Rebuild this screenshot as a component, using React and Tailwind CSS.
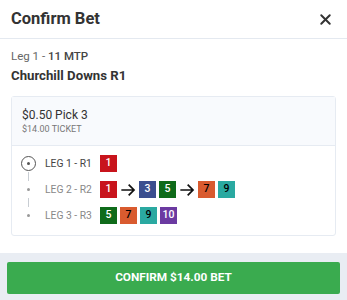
import { X } from "lucide-react";

const COLORS = {
  1: "bg-[#c8141c] text-white",
  3: "bg-[#3b4f8f] text-white",
  5: "bg-[#0f6b1a] text-white",
  7: "bg-[#d95b2f] text-black",
  9: "bg-[#2aa9a1] text-black",
  10: "bg-[#6b3aa1] text-white",
};

const Runner = ({ n }) => (
  <span
    className={`w-[17px] h-[17px] flex items-center justify-center text-[10.5px] font-medium leading-none ${COLORS[n]}`}
  >
    {n}
  </span>
);

const Arrow = () => (
  <svg width="16" height="16" viewBox="0 0 24 24" fill="none" stroke="#111" strokeWidth="2.6">
    <path d="M2 12h19M13 4l8 8-8 8" />
  </svg>
);

const legs = [
  { label: "LEG 1 - R1", picks: [1], active: true },
  { label: "LEG 2 - R2", picks: [1, "->", 3, 5, "->", 7, 9] },
  { label: "LEG 3 - R3", picks: [5, 7, 9, 10] },
];

export default function App() {
  return (
    <div className="w-[347px] h-[300px] bg-white flex flex-col font-['Roboto',sans-serif] text-[#333]">
      <div className="h-[39px] shrink-0 flex items-center justify-between pl-[11px] pr-[13px] border-b border-[#e4e9f0]">
        <span className="text-[16.5px] font-bold text-[#333]">Confirm Bet</span>
        <X className="w-[17px] h-[17px] text-[#333]" strokeWidth={2.75} />
      </div>
      <div className="px-[11px] pt-[9px] flex-1">
        <div className="text-[11.5px] text-[#666] leading-[16px]">
          Leg 1 - <span className="font-medium text-[#444]">11 MTP</span>
        </div>
        <div className="text-[13.2px] font-bold leading-[18px] mt-[3px]">Churchill Downs R1</div>
        <div className="mt-[11px] border border-[#e6ebf2] rounded-[3px]">
          <div className="bg-[#f8fafd] px-[10px] pt-[10px] pb-[10px] border-b border-[#e6ebf2]">
            <div className="text-[12px] leading-[16px] text-[#333]">$0.50 Pick 3</div>
            <div className="text-[9px] leading-[12px] text-[#777]">$14.00 TICKET</div>
          </div>
          <div className="pt-[9px] pb-[11px] pl-[8px] flex flex-col">
            {legs.map((leg, i) => (
              <div key={leg.label} className="flex flex-col">
                {i > 0 && (
                  <div className="w-[16px] flex justify-center h-[9px]">
                    <div className="w-[1px] h-full bg-[#c8cdd3]" />
                  </div>
                )}
                <div className="flex items-center h-[17px]">
                  <div className="w-[16px] flex justify-center">
                    {leg.active ? (
                      <span className="w-[15px] h-[15px] rounded-full border-[1.5px] border-[#555] flex items-center justify-center">
                        <span className="w-[3px] h-[3px] rounded-full bg-[#555]" />
                      </span>
                    ) : (
                      <span className="w-[3px] h-[3px] rounded-full bg-[#999]" />
                    )}
                  </div>
                  <span
                    className={`ml-[9px] w-[55px] text-[10.3px] ${leg.active ? "text-[#444]" : "text-[#888]"}`}
                  >
                    {leg.label}
                  </span>
                  <div className="flex items-center gap-[3px]">
                    {leg.picks.map((p, j) => (p === "->" ? <Arrow key={j} /> : <Runner key={j} n={p} />))}
                  </div>
                </div>
              </div>
            ))}
          </div>
        </div>
      </div>
      <div className="bg-[#e9edf3] px-[7px] pt-[9px] pb-[6px]">
        <button className="w-full h-[32px] rounded-[2px] bg-[#3aab4f] text-white text-[11.8px] font-bold">
          CONFIRM $14.00 BET
        </button>
      </div>
    </div>
  );
}
